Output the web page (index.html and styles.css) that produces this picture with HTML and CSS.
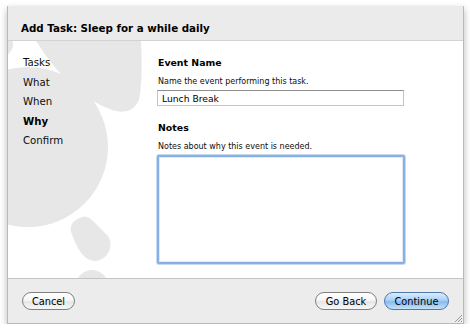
FILE: index.html
```html
<!DOCTYPE html>
<html lang="en">
<head>
    <meta charset="UTF-8">
    <meta name="viewport" content="width=device-width, initial-scale=1.0">
    <title>Add Task</title>
    <link rel="stylesheet" href="styles.css">
</head>
<body>
    <div class="sheet">
        <div class="sheet-head">
            <h1>Add Task: Sleep for a while daily</h1>
        </div>

        <div class="sheet-body">
            <svg class="backdrop" width="456" height="237" viewBox="0 0 456 237" aria-hidden="true">
                <g transform="translate(-8,-41)" fill="#e7e7e7">
                    <circle cx="28" cy="147" r="80"/>
                    <circle cx="0" cy="44" r="13"/>
                    <path d="M36 41 Q70 95 112 110 Q132 116 139 100 Q143 80 141 41 Z"/>
                    <path d="M80 218 Q86 214 92 220 L108 236 Q114 246 106 256 Q96 265 86 258 Q78 252 71 232 Q69 222 80 218 Z"/>
                    <circle cx="92" cy="286" r="16"/>
                </g>
            </svg>

            <ul class="steps">
                <li>Tasks</li>
                <li>What</li>
                <li>When</li>
                <li class="current">Why</li>
                <li>Confirm</li>
            </ul>

            <form class="pane">
                <label class="field-title" for="event-name">Event Name</label>
                <p class="hint">Name the event performing this task.</p>
                <input type="text" id="event-name" value="Lunch Break">

                <label class="field-title notes-title" for="notes">Notes</label>
                <p class="hint">Notes about why this event is needed.</p>
                <textarea id="notes"></textarea>
            </form>
        </div>

        <div class="sheet-foot">
            <button type="button">Cancel</button>
            <span class="spacer"></span>
            <button type="button" class="back">Go Back</button>
            <button type="button" class="default">Continue</button>
            <svg class="grip" width="8" height="8" viewBox="0 0 8 8" aria-hidden="true">
                <path d="M8 1 L1 8 M8 4 L4 8 M8 7 L7 8" stroke="#9a9a9a" stroke-width="1"/>
            </svg>
        </div>
    </div>
</body>
</html>
```

FILE: styles.css
```css
* {
    box-sizing: border-box;
}

body {
    margin: 0;
    background: #ffffff;
    font-family: 'DejaVu Sans', sans-serif;
    color: #111;
}

.sheet {
    position: relative;
    width: 457px;
    height: 318px;
    margin: 6px 0 0 7px;
    display: flex;
    flex-direction: column;
    border: 1px solid #b9b9b9;
    border-top: none;
    box-shadow: 0 3px 7px rgba(0, 0, 0, 0.28);
    background: #ececec;
}

.sheet-head {
    height: 35px;
    padding: 15px 13px 0;
    background: #ebebeb;
    border-bottom: 1px solid #d3d3d3;
}

.sheet-head h1 {
    margin: 0;
    font-size: 10.3px;
    line-height: 14px;
    font-weight: bold;
    color: #000;
}

.sheet-body {
    position: relative;
    height: 237px;
    display: flex;
    background: #ffffff;
    overflow: hidden;
}

.backdrop {
    position: absolute;
    left: 0;
    top: 0;
}

.steps {
    position: relative;
    width: 149px;
    margin: 0;
    padding: 12px 0 0 15px;
    list-style: none;
    font-size: 10.2px;
    line-height: 19.5px;
    color: #0d0d0d;
}

.steps .current {
    font-weight: bold;
    color: #000;
}

.pane {
    position: relative;
    display: flex;
    flex-direction: column;
    width: 248px;
    padding-top: 16px;
}

.field-title {
    font-size: 9.4px;
    line-height: 12px;
    font-weight: bold;
    color: #000;
    padding-left: 1px;
}

.hint {
    margin: 7px 0 3px;
    padding-left: 1px;
    font-size: 8px;
    line-height: 11px;
    color: #0d0d0d;
}

input {
    height: 16px;
    width: 247px;
    padding: 0 4px;
    border: 1px solid #c4c4c4;
    border-top-color: #8e8e8e;
    font-family: 'DejaVu Sans', sans-serif;
    font-size: 9.2px;
    color: #000;
    background: #fff;
}

.notes-title {
    margin-top: 16px;
}

textarea {
    width: 248px;
    height: 109px;
    margin: 0;
    border: 2px solid #86b0e2;
    border-radius: 2px;
    box-shadow: 0 0 0 1px #c7daf2, inset 0 0 0 1px #dfe9f7;
    resize: none;
    outline: none;
    background: #fff;
}

.sheet-foot {
    position: relative;
    flex: 1;
    display: flex;
    align-items: flex-start;
    gap: 7px;
    padding: 13px 14px 0 14px;
    border-top: 1px solid #c4c4c4;
    background: #ececec;
}

.spacer {
    flex: 1;
}

button {
    height: 18px;
    padding: 0;
    border: 1px solid #7f7f7f;
    border-radius: 9px;
    background: linear-gradient(#ffffff, #f6f6f6 45%, #e6e6e6 55%, #f7f7f7);
    font-family: 'DejaVu Sans', sans-serif;
    font-size: 9.8px;
    color: #000;
    width: 53px;
    cursor: pointer;
}

button.back {
    width: 62px;
}

button.default {
    width: 65px;
    border-color: #4f78ad;
    background: linear-gradient(#d9ecfd, #aad1f6 45%, #86bcef 55%, #c4e2fc);
}

.grip {
    position: absolute;
    right: 1px;
    bottom: 1px;
}
```
